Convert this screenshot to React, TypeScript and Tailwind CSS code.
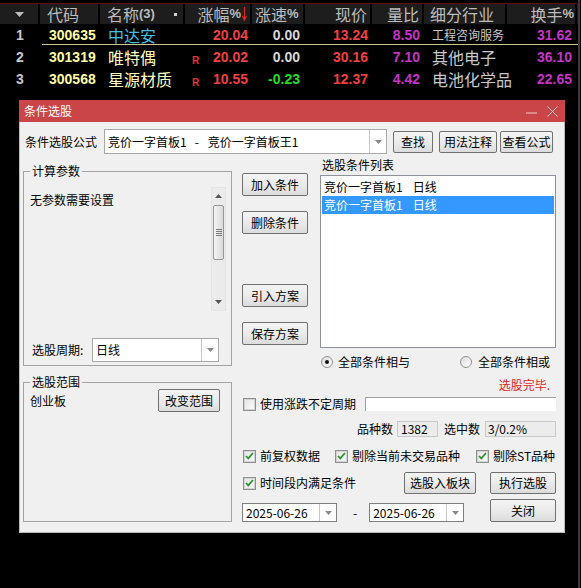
import React from "react";

const CJK = "font-['Noto_Sans_CJK_SC','Noto_Sans_CJK_JP',sans-serif]";
const NUM = "font-['Liberation_Sans',Arial,sans-serif] font-bold text-[14px]";

type Quote = {
  idx: number;
  code: string;
  name: string;
  nameCls: string;
  r: boolean;
  zf: string;
  zs: string;
  zsCls: string;
  price: string;
  lb: string;
  hy: string;
  hyCls: string;
  hs: string;
};

const quotes: Quote[] = [
  { idx: 1, code: "300635", name: "中达安", nameCls: "text-[#44bde0]", r: false, zf: "20.04", zs: "0.00", zsCls: "text-[#d8d8d8]", price: "13.24", lb: "8.50", hy: "工程咨询服务", hyCls: "text-[12px]", hs: "31.62" },
  { idx: 2, code: "301319", name: "唯特偶", nameCls: "text-[#ffffc0]", r: true, zf: "20.02", zs: "0.00", zsCls: "text-[#d8d8d8]", price: "30.16", lb: "7.10", hy: "其他电子", hyCls: "text-[16px]", hs: "36.10" },
  { idx: 3, code: "300568", name: "星源材质", nameCls: "text-[#ffffc0]", r: true, zf: "10.55", zs: "-0.23", zsCls: "text-[#22dd22]", price: "12.37", lb: "4.42", hy: "电池化学品", hyCls: "text-[16px]", hs: "22.65" },
];

function QuoteRow({ q, h }: { q: Quote; h: string }) {
  return (
    <div className={`flex items-center ${h}`}>
      <div className={`w-[40px] text-center text-[#c8c8c8] ${NUM}`}>{q.idx}</div>
      <div className={`w-[60px] pl-[9px] text-[#ffffa0] ${NUM}`}>{q.code}</div>
      <div className={`w-[85px] pl-[8px] text-[16px] leading-[16px] ${CJK} ${q.nameCls}`}>{q.name}</div>
      <div className="flex w-[67px] items-center pl-[7px] pr-[4px]">
        {q.r && (
          <span className="mt-[7px] font-['Liberation_Sans',sans-serif] text-[10px] font-bold text-[#e83030]">R</span>
        )}
        <span className={`ml-auto text-[#f04040] ${NUM}`}>{q.zf}</span>
      </div>
      <div className={`w-[53px] pr-[5px] text-right ${NUM} ${q.zsCls}`}>{q.zs}</div>
      <div className={`w-[67px] pr-[4px] text-right text-[#f04040] ${NUM}`}>{q.price}</div>
      <div className={`w-[52px] pr-[4px] text-right text-[#c534c5] ${NUM}`}>{q.lb}</div>
      <div className={`w-[83px] whitespace-nowrap pl-[8px] leading-[16px] text-[#c8c8c8] ${CJK} ${q.hyCls}`}>{q.hy}</div>
      <div className={`w-[70px] pr-[5px] text-right text-[#c534c5] ${NUM}`}>{q.hs}</div>
    </div>
  );
}

function QuoteTable() {
  const head = `text-[16px] leading-[16px] text-[#bcbcbc] ${CJK}`;
  return (
    <div className="h-[90px] overflow-hidden">
      <div className="h-[3px]" />
      <div className="h-[1px] w-[578px] bg-[#5e1010]" />
      <div className={`flex h-[20px] w-[578px] items-stretch bg-[#1d1d1d] ${head}`}>
        <div className="flex w-[40px] items-center justify-center border-r-2 border-black">
          <svg width="9" height="5" viewBox="0 0 9 5">
            <path d="M0 0h9L4.5 5z" fill="#bcbcbc" />
          </svg>
        </div>
        <div className="flex w-[60px] items-center border-r-2 border-black pl-[7px]">代码</div>
        <div className="flex w-[85px] items-center border-r-2 border-black pl-[7px]">
          名称
          <span className="font-['Liberation_Sans',sans-serif] text-[13px] font-bold">(3)</span>
          <span className="ml-auto mr-[6px] h-[3px] w-[3px] bg-[#d0d0d0]" />
        </div>
        <div className="flex w-[67px] items-center justify-end border-r-2 border-black pr-[3px]">
          涨幅
          <span className="font-['Liberation_Sans',sans-serif] text-[13px] font-bold">%</span>
          <svg width="5" height="14" viewBox="0 0 5 14" className="ml-[1px]">
            <path d="M2.5 0v12M0.5 9l2 4 2-4" stroke="#e02828" strokeWidth="1.2" fill="none" />
          </svg>
        </div>
        <div className="flex w-[53px] items-center border-r-2 border-black pl-[3px]">
          涨速
          <span className="font-['Liberation_Sans',sans-serif] text-[13px] font-bold">%</span>
        </div>
        <div className="flex w-[67px] items-center justify-end border-r-2 border-black pr-[3px]">现价</div>
        <div className="flex w-[52px] items-center justify-end border-r-2 border-black pr-[3px]">量比</div>
        <div className="flex w-[83px] items-center border-r-2 border-black pl-[6px]">细分行业</div>
        <div className="flex w-[70px] items-center justify-end border-r-2 border-black pr-[1px]">
          换手
          <span className="font-['Liberation_Sans',sans-serif] text-[13px] font-bold">%</span>
        </div>
      </div>
      <QuoteRow q={quotes[0]} h="h-[20px] pt-[2px]" />
      <div className="ml-[42px] h-[1px] w-[536px] bg-[#cfc58e]" />
      <div className="h-[1px]" />
      <QuoteRow q={quotes[1]} h="h-[22px]" />
      <QuoteRow q={quotes[2]} h="h-[22px]" />
    </div>
  );
}

function Btn({ children, className }: { children: React.ReactNode; className: string }) {
  return (
    <div
      className={`flex shrink-0 items-center justify-center rounded-[2px] border border-[#707070] bg-linear-to-b from-[#f4f4f4] via-[#ebebeb] to-[#dcdcdc] text-[12px] leading-none text-black ${className}`}
    >
      {children}
    </div>
  );
}

function Arrow() {
  return (
    <svg width="7" height="4" viewBox="0 0 7 4">
      <path d="M0 0h7L3.5 4z" fill="#8a8a8a" />
    </svg>
  );
}

function Combo({ children, className, border }: { children: React.ReactNode; className: string; border: string }) {
  return (
    <div className={`flex shrink-0 border bg-white ${border} ${className}`}>
      <div className="flex flex-1 items-center whitespace-pre pl-[3px] text-[12px]">{children}</div>
      <div className="flex w-[17px] items-center justify-center border-l border-[#c6c6c6]">
        <Arrow />
      </div>
    </div>
  );
}

function Check({ on }: { on: boolean }) {
  return (
    <span className="flex h-[13px] w-[13px] shrink-0 items-center justify-center border border-[#8e8f8f] bg-white">
      <span className="flex h-[11px] w-[11px] items-center justify-center border border-[#d2d2d2] bg-linear-to-br from-[#e6e6e6] to-[#fafafa]">
        {on && (
          <svg width="9" height="8" viewBox="0 0 9 8">
            <path d="M1 4l2.3 2.4L8 1" stroke="#2c952c" strokeWidth="1.8" fill="none" />
          </svg>
        )}
      </span>
    </span>
  );
}

function Radio({ on }: { on: boolean }) {
  return (
    <span className="flex h-[12px] w-[12px] shrink-0 items-center justify-center rounded-full border border-[#8e8f8f] bg-linear-to-br from-[#dcdcdc] to-white">
      {on && <span className="h-[4px] w-[4px] rounded-full bg-[#111]" />}
    </span>
  );
}

function ScrollBar() {
  return (
    <div className="flex h-[124px] w-[15px] flex-col border border-[#e4e4e4] bg-[#ebebeb]">
      <div className="flex h-[16px] items-center justify-center">
        <svg width="7" height="4" viewBox="0 0 7 4">
          <path d="M0 4h7L3.5 0z" fill="#555" />
        </svg>
      </div>
      <div className="mx-[1px] mt-[1px] flex h-[55px] items-center justify-center rounded-[2px] border border-[#979797] bg-linear-to-r from-[#f4f4f4] to-[#d9d9d9]">
        <div className="flex flex-col gap-[1px]">
          <div className="h-[1px] w-[6px] bg-[#7a7a7a]" />
          <div className="h-[1px] w-[6px] bg-[#7a7a7a]" />
          <div className="h-[1px] w-[6px] bg-[#7a7a7a]" />
          <div className="h-[1px] w-[6px] bg-[#7a7a7a]" />
        </div>
      </div>
      <div className="flex-1" />
      <div className="flex h-[16px] items-center justify-center">
        <svg width="7" height="4" viewBox="0 0 7 4">
          <path d="M0 0h7L3.5 4z" fill="#555" />
        </svg>
      </div>
    </div>
  );
}

// 分组框：顶边由两段线和标题拼成
function Group({ title, className, children }: { title: string; className: string; children: React.ReactNode }) {
  return (
    <div className={`flex flex-col overflow-hidden ${className}`}>
      <div className="flex h-[16px] shrink-0">
        <div className="mt-[8px] w-[7px] border-l border-t border-[#a3a3a3]" />
        <span className="px-[2px] leading-[16px]">{title}</span>
        <div className="mt-[8px] flex-1 border-r border-t border-[#a3a3a3]" />
      </div>
      <div className="min-h-0 flex-1 border-x border-b border-[#a3a3a3]">{children}</div>
    </div>
  );
}

function ListItem({ selected }: { selected: boolean }) {
  return (
    <div
      className={`flex h-[18px] items-center pl-[2px] ${selected ? "bg-[#3399ff] text-white" : ""}`}
    >
      竞价一字首板1<span className="ml-[10px]">日线</span>
    </div>
  );
}

function Dialog() {
  return (
    <div className={`ml-[19px] mt-[10px] w-[546px] text-[12px] leading-[14px] text-black ${CJK}`}>
      <div className="flex h-[22px] items-center bg-[#c94548] pl-[5px] text-white">
        <span className="text-[12px]">条件选股</span>
        <svg width="11" height="2" viewBox="0 0 11 2" className="ml-auto mt-[3px]">
          <path d="M0 1h11" stroke="#f2cccc" strokeWidth="1" />
        </svg>
        <svg width="11" height="11" viewBox="0 0 11 11" className="ml-[10px] mr-[7px]">
          <path d="M0.5 0.5l10 10M10.5 0.5l-10 10" stroke="#f2cccc" strokeWidth="1" />
        </svg>
      </div>

      <div className="h-[411px] overflow-hidden border-x border-b border-[#b9b9b9] bg-[#f0f0f0] pl-[3px] pt-[7px]">
        {/* 公式行 */}
        <div className="flex h-[25px] items-center">
          <span className="ml-[2px] w-[79px]">条件选股公式</span>
          <Combo className="h-[25px] w-[283px]" border="border-[#a9a9a9]">
            竞价一字首板1<span className="ml-[8px]">-</span>
            <span className="ml-[9px]">竞价一字首板王1</span>
          </Combo>
          <Btn className="ml-[6px] h-[22px] w-[40px]">查找</Btn>
          <Btn className="ml-[6px] h-[22px] w-[58px]">用法注释</Btn>
          <Btn className="ml-[3px] h-[22px] w-[53px]">查看公式</Btn>
        </div>

        <div className="mt-[4px] flex h-[364px] items-start">
          {/* 左列 */}
          <div className="w-[209px] pt-[5px]">
            <Group title="计算参数" className="h-[203px]">
              <div className="flex pt-[8px]">
                <div className="flex-1 pl-[6px] pt-[6px]">无参数需要设置</div>
                <div className="mr-[5px]">
                  <ScrollBar />
                </div>
              </div>
              <div className="mt-[27px] flex h-[24px] items-center">
                <span className="w-[68px] pl-[8px]">选股周期:</span>
                <Combo className="h-[24px] w-[127px]" border="border-[#a9a9a9]">
                  日线
                </Combo>
              </div>
            </Group>

            <Group title="选股范围" className="mt-[8px] h-[148px]">
              <div className="-mt-[1px] flex h-[23px] items-center">
                <span className="pl-[6px]">创业板</span>
                <Btn className="ml-auto mr-[11px] h-[23px] w-[62px]">改变范围</Btn>
              </div>
            </Group>
          </div>

          {/* 右区 */}
          <div className="ml-[10px] flex w-[314px] flex-col">
            <div className="flex">
              <div className="flex w-[66px] flex-col pt-[15px]">
                <Btn className="h-[23px] w-[66px]">加入条件</Btn>
                <Btn className="mt-[15px] h-[23px] w-[66px]">删除条件</Btn>
                <Btn className="mt-[50px] h-[23px] w-[66px]">引入方案</Btn>
                <Btn className="mt-[15px] h-[23px] w-[66px]">保存方案</Btn>
              </div>
              <div className="ml-[12px] w-[236px]">
                <div className="h-[14px] pl-[2px]">选股条件列表</div>
                <div className="mt-[3px] h-[173px] border border-[#8f9299] bg-white px-[1px] pt-[2px]">
                  <ListItem selected={false} />
                  <ListItem selected={true} />
                </div>
                <div className="mt-[7px] flex h-[14px] items-center pl-[1px]">
                  <Radio on={true} />
                  <span className="ml-[5px]">全部条件相与</span>
                  <span className="ml-[50px]">
                    <Radio on={false} />
                  </span>
                  <span className="ml-[6px]">全部条件相或</span>
                </div>
              </div>
            </div>

            <div className="mt-[9px] h-[14px] pr-[6px] text-right text-[#e02424]">选股完毕.</div>

            <div className="mt-[5px] flex h-[14px] items-center pl-[1px]">
              <Check on={false} />
              <span className="ml-[4px]">使用涨跌不定周期</span>
              <div className="ml-auto h-[14px] w-[191px] border-l border-t border-[#a0a0a0] bg-white" />
            </div>

            <div className="mt-[10px] flex h-[16px] items-center justify-end">
              <span>品种数</span>
              <div className="ml-[4px] flex h-[16px] w-[41px] items-center border border-[#c9c9c9] bg-[#ececec] pl-[3px]">
                1382
              </div>
              <span className="ml-[6px]">选中数</span>
              <div className="ml-[5px] flex h-[16px] w-[71px] items-center border border-[#c9c9c9] bg-[#ececec] pl-[2px]">
                3/0.2%
              </div>
            </div>

            <div className="mt-[12px] flex h-[14px] items-center pl-[1px]">
              <div className="flex w-[92px] items-center">
                <Check on={true} />
                <span className="ml-[4px]">前复权数据</span>
              </div>
              <div className="flex w-[141px] items-center">
                <Check on={true} />
                <span className="ml-[4px]">剔除当前未交易品种</span>
              </div>
              <div className="flex items-center">
                <Check on={true} />
                <span className="ml-[4px]">剔除ST品种</span>
              </div>
            </div>

            <div className="mt-[9px] flex h-[22px] items-center pl-[1px]">
              <Check on={true} />
              <span className="ml-[4px]">时间段内满足条件</span>
              <Btn className="ml-auto h-[22px] w-[72px]">选股入板块</Btn>
              <Btn className="ml-[14px] h-[22px] w-[66px]">执行选股</Btn>
            </div>

            <div className="mt-[5px] flex h-[23px] items-end">
              <Combo className="h-[19px] w-[95px]" border="border-[#7f7f7f]">
                2025-06-26
              </Combo>
              <span className="mb-[2px] ml-[16px]">-</span>
              <Combo className="ml-[12px] h-[19px] w-[95px]" border="border-[#7f7f7f]">
                2025-06-26
              </Combo>
              <Btn className="ml-auto h-[23px] w-[66px]">关闭</Btn>
            </div>
          </div>
        </div>
      </div>
    </div>
  );
}

export default function App() {
  return (
    <div className="relative h-[588px] w-[581px] overflow-hidden bg-black">
      <div className="flex">
        <div className="w-[578px]">
          <QuoteTable />
          <Dialog />
        </div>
        <div className="h-[588px] w-[2px] bg-[#3a3a3a]" />
      </div>
    </div>
  );
}
